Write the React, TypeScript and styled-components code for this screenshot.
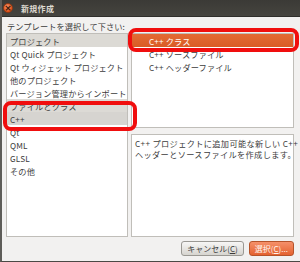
import React from 'react';
import styled, { createGlobalStyle } from 'styled-components';

const GlobalStyle = createGlobalStyle`
  html, body {
    margin: 0;
    padding: 0;
    background: #f2f1f0;
    overflow: hidden;
  }
  * { box-sizing: border-box; }
`;

const FONT = `"Noto Sans CJK JP", "Liberation Sans", sans-serif`;

type RowKind = 'header' | 'item' | 'active' | 'selected';

const leftRows: { text: string; kind: RowKind }[] = [
  { text: 'プロジェクト', kind: 'header' },
  { text: 'Qt Quick プロジェクト', kind: 'item' },
  { text: 'Qt ウィジェット プロジェクト', kind: 'item' },
  { text: '他のプロジェクト', kind: 'item' },
  { text: 'バージョン管理からインポート', kind: 'item' },
  { text: 'ファイルとクラス', kind: 'header' },
  { text: 'C++', kind: 'active' },
  { text: 'Qt', kind: 'item' },
  { text: 'QML', kind: 'item' },
  { text: 'GLSL', kind: 'item' },
  { text: 'その他', kind: 'item' },
];

const rightRows: { text: string; kind: RowKind }[] = [
  { text: 'C++ クラス', kind: 'selected' },
  { text: 'C++ ソースファイル', kind: 'item' },
  { text: 'C++ ヘッダーファイル', kind: 'item' },
];

function App() {
  return (
    <>
      <GlobalStyle />
      <Window>
        <TitleBar>
          <CloseButton>×</CloseButton>
          <Title>新規作成</Title>
        </TitleBar>
        <Body>
          <Label>テンプレートを選択して下さい:</Label>
          <Panels>
            <Panel>
              {leftRows.map((r) => (
                <Row key={r.text} $kind={r.kind} $indent={3}>{r.text}</Row>
              ))}
            </Panel>
            <RightColumn>
              <Panel $height={95}>
                {rightRows.map((r) => (
                  <Row key={r.text} $kind={r.kind} $indent={17}>{r.text}</Row>
                ))}
              </Panel>
              <Description>
                <span>C++ プロジェクトに追加可能な新しい C++</span>
                <span>ヘッダーとソースファイルを作成します。</span>
              </Description>
            </RightColumn>
          </Panels>
          <ButtonBar>
            <Button>キャンセル(<u>C</u>)</Button>
            <Button $primary>選択(<u>C</u>)...</Button>
          </ButtonBar>
        </Body>
        <Marker style={{ left: 126, top: 28, width: 171, height: 24 }} />
        <Marker style={{ left: 1, top: 101, width: 134, height: 30 }} />
      </Window>
    </>
  );
}

export default App;

const Window = styled.div`
  position: relative;
  width: 300px;
  height: 262px;
  display: flex;
  flex-direction: column;
  background: #f2f1f0;
  border-left: 2px solid #5e5d59;
  border-bottom: 1px solid #4a4945;
  font-family: ${FONT};
  color: #3c3c3c;
  overflow: hidden;
`;

const TitleBar = styled.div`
  height: 17px;
  flex: none;
  display: flex;
  align-items: center;
  gap: 8px;
  padding-left: 1px;
  background: linear-gradient(#3b3a36, #45443f);
  border-bottom: 1px solid #2f2e2b;
`;

const CloseButton = styled.div`
  width: 10px;
  height: 10px;
  border-radius: 50%;
  background: radial-gradient(circle at 40% 35%, #f6936a, #e2521a 70%);
  border: 1px solid #8f3a16;
  color: #3a1a0a;
  font-size: 9px;
  font-weight: 700;
  line-height: 8px;
  text-align: center;
  font-family: "DejaVu Sans", sans-serif;
`;

const Title = styled.span`
  font-size: 8px;
  font-weight: 700;
  color: #dfdbd2;
  letter-spacing: 0.3px;
`;

const Body = styled.div`
  flex: 1;
  display: flex;
  flex-direction: column;
  padding: 0 4px 0 4px;
`;

const Label = styled.div`
  height: 16px;
  display: flex;
  align-items: center;
  padding-left: 1px;
  font-size: 8.2px;
  letter-spacing: 0.1px;
  padding-top: 2px;
`;

const Panels = styled.div`
  display: grid;
  grid-template-columns: 122px 163px;
  column-gap: 3px;
  height: 204px;
`;

const Panel = styled.div<{ $height?: number }>`
  background: #ffffff;
  border: 1px solid #c0beb9;
  display: flex;
  flex-direction: column;
  height: ${(p) => (p.$height ? `${p.$height}px` : 'auto')};
  overflow: hidden;
`;

const Row = styled.div<{ $kind: RowKind; $indent: number }>`
  height: 13px;
  flex: none;
  display: flex;
  align-items: center;
  padding-left: ${(p) => p.$indent}px;
  font-size: 8.2px;
  letter-spacing: 0.15px;
  white-space: nowrap;
  color: ${(p) => (p.$kind === 'selected' ? '#ffffff' : '#3c3c3c')};
  background: ${(p) =>
    p.$kind === 'header'
      ? '#dcdad5'
      : p.$kind === 'active'
      ? '#d6d4d0'
      : p.$kind === 'selected'
      ? 'linear-gradient(#e36a34, #d95c25)'
      : 'transparent'};
`;

const RightColumn = styled.div`
  display: flex;
  flex-direction: column;
  gap: 6px;
`;

const Description = styled.div`
  flex: 1;
  background: #ffffff;
  border: 1px solid #c0beb9;
  padding: 3px 3px;
  display: flex;
  flex-direction: column;
  font-size: 8.2px;
  letter-spacing: 0.35px;
  line-height: 11px;
  white-space: nowrap;
`;

const ButtonBar = styled.div`
  display: flex;
  justify-content: flex-end;
  gap: 5px;
  padding-top: 4px;
  padding-right: 2px;
`;

const Button = styled.div<{ $primary?: boolean }>`
  height: 15px;
  padding: 0 5px;
  display: flex;
  align-items: center;
  font-size: 8px;
  border-radius: 3px;
  border: 1px solid ${(p) => (p.$primary ? '#b5532a' : '#9a9893')};
  color: ${(p) => (p.$primary ? '#fff4ee' : '#3c3c3c')};
  background: ${(p) =>
    p.$primary
      ? 'linear-gradient(#f5906a, #e4622f)'
      : 'linear-gradient(#f7f6f5, #d6d4cf)'};
  u {
    text-decoration-thickness: 1px;
    text-underline-offset: 1px;
  }
`;

const Marker = styled.div`
  position: absolute;
  border: 4px solid #f00e0e;
  border-radius: 8px;
  pointer-events: none;
`;
